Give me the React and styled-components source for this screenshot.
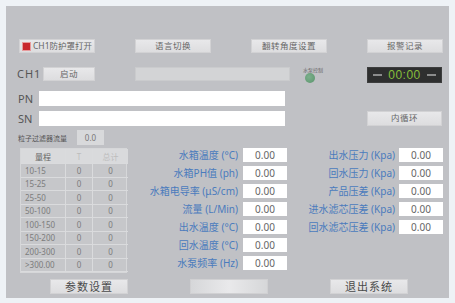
import React from "react";
import styled, { createGlobalStyle } from "styled-components";

const FONT = `"Noto Sans", "Noto Sans CJK SC", sans-serif`;

const Global = createGlobalStyle`
  html, body { margin: 0; padding: 0; background: #eef2f6; }
  body { font-family: ${FONT}; }
  * { box-sizing: border-box; }
`;

const Panel = styled.div`
  margin: 6px 0 0 6px;
  width: 443px;
  height: 292px;
  background: #c0c1c5;
  padding-top: 33px;
  display: flex;
  flex-direction: column;
`;

const TopRow = styled.div`
  display: grid;
  grid-template-columns: repeat(4, 76px);
  column-gap: 40px;
  padding-left: 13px;
  height: 14px;
`;

const Btn = styled.button`
  width: ${(p) => p.$w || 76}px;
  height: ${(p) => p.$h || 14}px;
  padding: 0;
  margin: 0;
  background: linear-gradient(#e8e8ea, #dddddf);
  border: 1px solid #d2d2d4;
  color: ${(p) => (p.$dark ? "#4a4a4a" : "#666")};
  font-family: ${FONT};
  font-size: ${(p) => p.$fs || 8.5}px;
  letter-spacing: ${(p) => (p.$ls === undefined ? 0.5 : p.$ls)}px;
  line-height: 1;
  white-space: nowrap;
  display: flex;
  align-items: center;
  justify-content: center;
  gap: 2px;
`;

const RedBox = styled.span`
  width: 9px;
  height: 9px;
  background: #c8262c;
  border: 1px solid #e79a9c;
  flex: none;
`;

const Row2 = styled.div`
  margin-top: 14px;
  display: flex;
  align-items: flex-start;
  padding-left: 11px;
  height: 16px;
`;

const BigLabel = styled.span`
  width: ${(p) => p.$w}px;
  font-size: 11px;
  color: #555;
  letter-spacing: 1px;
  line-height: 14px;
  font-family: ${FONT};
`;

const StatusBar = styled.div`
  margin-left: 40px;
  width: 155px;
  height: 14px;
  background: #d3d4d6;
  border: 1px solid #cacbcd;
`;

const LedGroup = styled.div`
  margin-left: 13px;
  width: 23px;
  display: flex;
  flex-direction: column;
  align-items: flex-start;
`;

const LedText = styled.span`
  font-size: 5px;
  line-height: 6px;
  color: #666;
  white-space: nowrap;
`;

const Led = styled.span`
  margin-left: 2px;
  width: 10px;
  height: 10px;
  border-radius: 50%;
  background: radial-gradient(circle at 40% 40%, #7cb08c, #5a946c);
`;

const Timer = styled.div`
  margin-left: 41px;
  width: 75px;
  height: 16px;
  background: #2e2f2f;
  border: 1px solid #3d3e3e;
  display: flex;
  align-items: center;
  justify-content: space-between;
  padding: 0 5px;
`;

const Dash = styled.span`
  width: 9px;
  height: 2px;
  background: #8b8c8c;
`;

const TimeText = styled.span`
  color: #86bf3a;
  font-family: "Liberation Sans", sans-serif;
  font-size: 12px;
  letter-spacing: 0.5px;
`;

const FieldRow = styled.div`
  margin-top: ${(p) => p.$mt}px;
  display: flex;
  align-items: center;
  padding-left: 12px;
  height: 15px;
`;

const FieldLabel = styled.span`
  width: 21px;
  font-size: 11px;
  color: #555;
  font-family: ${FONT};
`;

const TextInput = styled.div`
  width: 246px;
  height: 15px;
  background: #ffffff;
`;

const Spacer = styled.div`
  width: ${(p) => p.$w}px;
  flex: none;
`;

const FilterRow = styled.div`
  margin-top: 4px;
  display: flex;
  align-items: center;
  padding-left: 12px;
  height: 15px;
`;

const SmallLabel = styled.span`
  font-size: 7px;
  color: #555;
  width: 59px;
  white-space: nowrap;
`;

const SmallBox = styled.div`
  width: 27px;
  height: 15px;
  background: #d8d9db;
  color: #777;
  font-size: 8px;
  display: flex;
  align-items: center;
  justify-content: center;
  font-family: ${FONT};
`;

const Main = styled.div`
  margin-top: 3px;
  display: flex;
  height: 122px;
`;

const Table = styled.div`
  margin-left: 14px;
  width: 107px;
  align-self: flex-start;
  display: grid;
  grid-template-columns: 45px 27px 35px;
  background: #c6c7ca;
  border: 1px solid #d6d7d9;
`;

const Cell = styled.div`
  height: ${(p) => (p.$head ? 15 : 13.5)}px;
  background: ${(p) => (p.$head ? "#d9dadc" : "transparent")};
  border-right: ${(p) => (p.$last ? "none" : "1px solid #dadbdd")};
  border-bottom: 1px solid #dadbdd;
  font-size: 8px;
  color: ${(p) => (p.$faint ? "#bdbdbd" : p.$head ? "#666" : "#7c7c7c")};
  display: flex;
  align-items: center;
  justify-content: ${(p) => (p.$left ? "flex-start" : "center")};
  padding-left: ${(p) => (p.$left ? 4 : 0)}px;
  font-family: ${FONT};
`;

const ValueGrid = styled.div`
  margin-left: ${(p) => p.$ml}px;
  display: grid;
  grid-template-columns: ${(p) => p.$lw}px 44px;
  column-gap: ${(p) => p.$gap}px;
  row-gap: 4px;
  align-content: start;
`;

const ValLabel = styled.span`
  height: 14px;
  line-height: 14px;
  text-align: right;
  color: #4a7bbd;
  font-size: 10px;
  white-space: nowrap;
  font-family: ${FONT};
`;

const ValBox = styled.div`
  height: 14px;
  background: #ffffff;
  color: #666;
  font-size: 10px;
  display: flex;
  align-items: center;
  justify-content: center;
  font-family: ${FONT};
`;

const BottomRow = styled.div`
  margin-top: 9px;
  display: flex;
  padding-left: 44px;
  gap: 62px;
`;

const BlankBtn = styled.div`
  width: 78px;
  height: 15px;
  background: linear-gradient(90deg, #d6d7d9, #e9e9eb 50%, #d6d7d9);
  border: 1px solid #d0d0d2;
`;

const ranges = ["10-15", "15-25", "25-50", "50-100", "100-150", "150-200", "200-300", ">300.00"];
const mid = [
  "水箱温度 (°C)",
  "水箱PH值 (ph)",
  "水箱电导率 (μS/cm)",
  "流量 (L/Min)",
  "出水温度 (°C)",
  "回水温度 (°C)",
  "水泵频率 (Hz)",
];
const right = [
  "出水压力 (Kpa)",
  "回水压力 (Kpa)",
  "产品压差 (Kpa)",
  "进水滤芯压差 (Kpa)",
  "回水滤芯压差 (Kpa)",
];

export default function App() {
  return (
    <>
      <Global />
      <Panel>
        <TopRow>
          <Btn $w={76} $ls={0}>
            <RedBox />
            CH1防护罩打开
          </Btn>
          <Btn>语言切换</Btn>
          <Btn>翻转角度设置</Btn>
          <Btn>报警记录</Btn>
        </TopRow>
        <Row2>
          <BigLabel $w={26}>CH1</BigLabel>
          <Btn $w={52}>启动</Btn>
          <StatusBar />
          <LedGroup>
            <LedText>水泵控制</LedText>
            <Led />
          </LedGroup>
          <Timer>
            <Dash />
            <TimeText>00:00</TimeText>
            <Dash />
          </Timer>
        </Row2>
        <FieldRow $mt={8}>
          <FieldLabel>PN</FieldLabel>
          <TextInput />
        </FieldRow>
        <FieldRow $mt={5}>
          <FieldLabel>SN</FieldLabel>
          <TextInput />
          <Spacer $w={82} />
          <Btn $w={75} $h={15}>内循环</Btn>
        </FieldRow>
        <FilterRow>
          <SmallLabel>粒子过滤器流量</SmallLabel>
          <SmallBox>0.0</SmallBox>
        </FilterRow>
        <Main>
          <Table>
            <Cell $head>量程</Cell>
            <Cell $head $faint>T</Cell>
            <Cell $head $faint $last>总计</Cell>
            {ranges.map((r) => (
              <React.Fragment key={r}>
                <Cell $left>{r}</Cell>
                <Cell>0</Cell>
                <Cell $last>0</Cell>
              </React.Fragment>
            ))}
          </Table>
          <ValueGrid $ml={6} $lw={105} $gap={5}>
            {mid.map((m) => (
              <React.Fragment key={m}>
                <ValLabel>{m}</ValLabel>
                <ValBox>0.00</ValBox>
              </React.Fragment>
            ))}
          </ValueGrid>
          <ValueGrid $ml={8} $lw={100} $gap={4}>
            {right.map((m) => (
              <React.Fragment key={m}>
                <ValLabel>{m}</ValLabel>
                <ValBox>0.00</ValBox>
              </React.Fragment>
            ))}
          </ValueGrid>
        </Main>
        <BottomRow>
          <Btn $w={78} $h={15} $fs={11} $ls={1} $dark>参数设置</Btn>
          <BlankBtn />
          <Btn $w={78} $h={15} $fs={11} $ls={1} $dark>退出系统</Btn>
        </BottomRow>
      </Panel>
    </>
  );
}
